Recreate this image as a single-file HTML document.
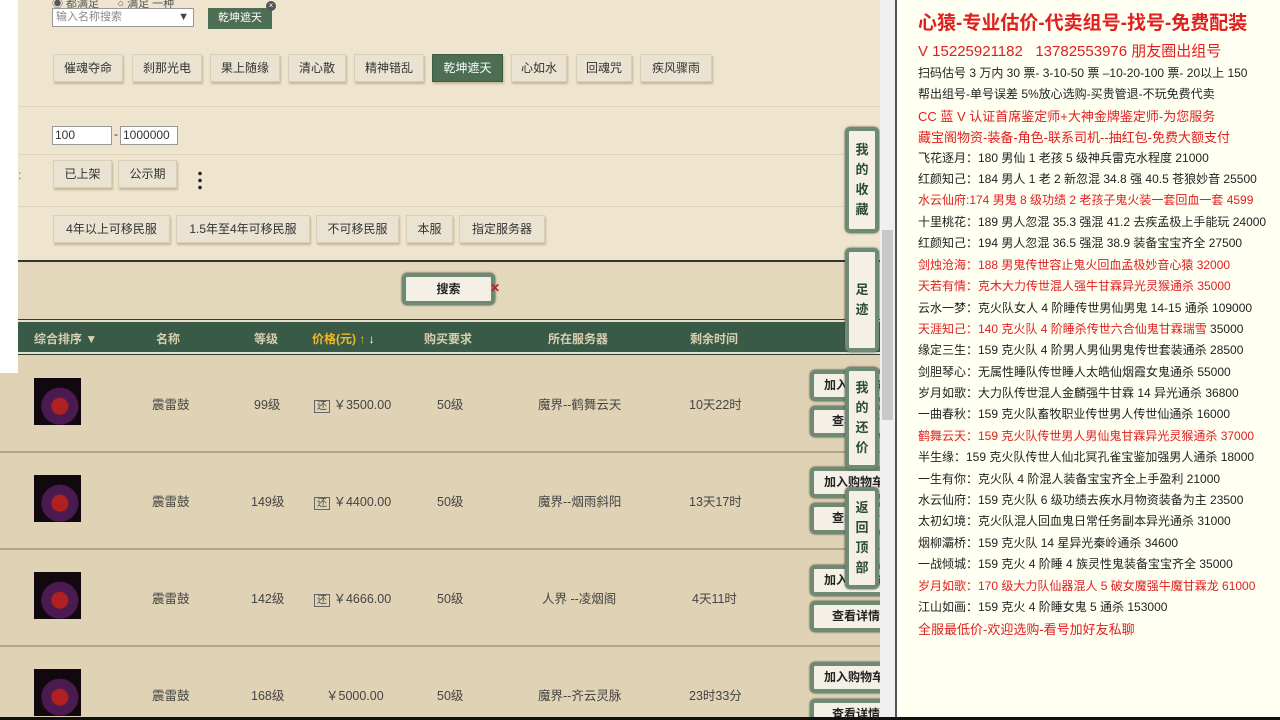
<!DOCTYPE html><html style="width:1280px;height:720px;overflow:hidden"><head><meta charset="utf-8"><style>
*{margin:0;padding:0;box-sizing:border-box}
body{width:1280px;height:720px;overflow:hidden;position:relative;background:#e0d3b5;font-family:"Liberation Sans","Noto Sans CJK SC",sans-serif;font-size:12px;color:#333}
.a{position:absolute}
.btn{position:absolute;height:28px;background:#eae3d2;border:1px solid #d8cfb8;box-shadow:1px 2px 2px #c4b898;color:#333;font-size:12px;line-height:26px;text-align:center}
.on{background:#4d6e52;color:#fff;border-color:#3e5c44}
.g{position:absolute;border:4px solid #6f8a72;border-radius:5px;background:#f4f0e6;box-shadow:0 0 2px #333;font-weight:bold;color:#222;font-size:12px;text-align:center}
.side{position:absolute;left:845px;width:34px;border:4px solid #6f8a72;border-radius:5px;background:#f4f0e6;color:#2c4a34;font-size:13px;font-weight:bold;text-align:center;line-height:20px;display:flex;flex-direction:column;justify-content:center;box-shadow:0 0 2px #444}
.r p{white-space:nowrap;position:absolute;left:918px;font-size:12px;color:#222}
.red{color:#e02020!important}
.row{position:absolute;left:0;width:880px;height:97px;border-bottom:2px solid #b0a588}
.row span{position:absolute;top:38px;color:#444;font-size:12.5px}
.img{position:absolute;left:34px;top:22px;width:47px;height:47px;background:radial-gradient(circle at 55% 60%,#b02020 0 8px,#4a1a50 9px 18px,#120810 19px)}
#wrap{position:absolute;left:0;top:0;width:1280px;height:720px;overflow:hidden}
</style></head><body><div id="wrap">
<div class="a" style="left:0;top:0;width:880px;height:260px;background:#efe5cf"></div>
<div class="a" style="left:0;top:260px;width:880px;height:62px;background:#e4d8bc;border-top:2px solid #333"></div>
<div class="a" style="left:0;top:0;width:18px;height:373px;background:#fff"></div>
<div class="a" style="left:18px;top:106px;width:862px;border-top:1px solid #e0d4b8"></div>
<div class="a" style="left:18px;top:154px;width:862px;border-top:1px solid #e0d4b8"></div>
<div class="a" style="left:18px;top:206px;width:862px;border-top:1px solid #e0d4b8"></div>
<div class="a" style="left:52px;top:-5px;font-size:11px;color:#555">◉ 都满足 &nbsp;&nbsp;&nbsp;&nbsp;&nbsp;○ 满足 一种</div>
<div class="a" style="left:52px;top:8px;width:142px;height:19px;background:#fff;border:1px solid #999;font-size:11px;color:#888;padding-left:3px;line-height:17px">输入名称搜索<span style="position:absolute;right:4px;color:#444">▼</span></div>
<div class="a on" style="left:208px;top:8px;width:64px;height:21px;background:#4d6e52;color:#fff;font-size:11px;line-height:21px;text-align:center">乾坤遮天</div>
<div class="a" style="left:266px;top:1px;width:10px;height:10px;border-radius:50%;background:#555;color:#fff;font-size:8px;line-height:10px;text-align:center">×</div>
<div class="btn" style="left:53px;top:54px;width:70px">催魂夺命</div>
<div class="btn" style="left:132px;top:54px;width:70px">刹那光电</div>
<div class="btn" style="left:210px;top:54px;width:70px">果上随缘</div>
<div class="btn" style="left:288px;top:54px;width:58px">清心散</div>
<div class="btn" style="left:354px;top:54px;width:70px">精神错乱</div>
<div class="btn on" style="left:432px;top:54px;width:71px">乾坤遮天</div>
<div class="btn" style="left:511px;top:54px;width:56px">心如水</div>
<div class="btn" style="left:576px;top:54px;width:56px">回魂咒</div>
<div class="btn" style="left:640px;top:54px;width:72px">疾风骤雨</div>
<div class="a" style="left:52px;top:126px;width:60px;height:19px;background:#fff;border:1px solid #999;line-height:17px;padding-left:2px">100</div>
<div class="a" style="left:114px;top:127px">-</div>
<div class="a" style="left:120px;top:126px;width:58px;height:19px;background:#fff;border:1px solid #999;line-height:17px;padding-left:2px">1000000</div>
<div class="a" style="left:18px;top:168px;color:#777">:</div>
<div class="btn" style="left:53px;top:160px;width:59px">已上架</div>
<div class="btn" style="left:118px;top:160px;width:59px">公示期</div>
<div class="a" style="left:198px;top:170px;width:4px;height:20px;background:radial-gradient(circle,#222 1.6px,transparent 2px) 0 0/4px 7px"></div>
<div class="btn" style="left:53px;top:215px;width:117px">4年以上可移民服</div>
<div class="btn" style="left:176px;top:215px;width:134px">1.5年至4年可移民服</div>
<div class="btn" style="left:316px;top:215px;width:83px">不可移民服</div>
<div class="btn" style="left:406px;top:215px;width:47px">本服</div>
<div class="btn" style="left:459px;top:215px;width:86px">指定服务器</div>
<div class="g" style="left:402px;top:273px;width:93px;height:32px;line-height:24px">搜索</div>
<div class="a" style="left:490px;top:281px;color:#c02020;font-weight:bold">✕</div>
<div class="a" style="left:18px;top:320px;width:862px;height:34px;background:#3a5a48;border-top:2px solid #e8e0cc;border-bottom:2px solid #e8e0cc;box-shadow:0 -1px 0 #2a4234,0 1px 0 #2a4234;color:#d8d0b0;font-weight:bold;font-size:12px">
<span class="a" style="left:16px;top:8px">综合排序 ▼</span><span class="a" style="left:138px;top:8px">名称</span><span class="a" style="left:236px;top:8px">等级</span><span class="a" style="left:294px;top:8px;color:#f0b820">价格(元) ↑ <span style="color:#fff">↓</span></span><span class="a" style="left:406px;top:8px">购买要求</span><span class="a" style="left:530px;top:8px">所在服务器</span><span class="a" style="left:672px;top:8px">剩余时间</span></div>
<div class="row" style="top:356px"><div class="img"></div><span style="left:152px">震雷鼓</span><span style="left:254px">99级</span><span style="left:314px"><b style="border:1px solid #666;font-weight:normal;font-size:10px;padding:0 2px">还</b> ￥3500.00</span><span style="left:437px">50级</span><span style="left:538px">魔界--鹤舞云天</span><span style="left:689px">10天22时</span></div>
<div class="row" style="top:453px"><div class="img"></div><span style="left:152px">震雷鼓</span><span style="left:251px">149级</span><span style="left:314px"><b style="border:1px solid #666;font-weight:normal;font-size:10px;padding:0 2px">还</b> ￥4400.00</span><span style="left:437px">50级</span><span style="left:538px">魔界--烟雨斜阳</span><span style="left:689px">13天17时</span></div>
<div class="row" style="top:550px"><div class="img"></div><span style="left:152px">震雷鼓</span><span style="left:251px">142级</span><span style="left:314px"><b style="border:1px solid #666;font-weight:normal;font-size:10px;padding:0 2px">还</b> ￥4666.00</span><span style="left:437px">50级</span><span style="left:542px">人界 --凌烟阁</span><span style="left:692px">4天11时</span></div>
<div class="row" style="top:647px;border:0"><div class="img"></div><span style="left:152px">震雷鼓</span><span style="left:251px">168级</span><span style="left:326px">￥5000.00</span><span style="left:437px">50级</span><span style="left:538px">魔界--齐云灵脉</span><span style="left:689px">23时33分</span></div>
<div class="g" style="left:810px;top:370px;width:80px;height:31px;line-height:23px;text-align:left;padding-left:10px">加入购物车</div>
<div class="g" style="left:810px;top:406px;width:80px;height:31px;line-height:23px;text-align:left;padding-left:18px">查看详情</div>
<div class="g" style="left:810px;top:467px;width:80px;height:31px;line-height:23px;text-align:left;padding-left:10px">加入购物车</div>
<div class="g" style="left:810px;top:503px;width:80px;height:31px;line-height:23px;text-align:left;padding-left:18px">查看详情</div>
<div class="g" style="left:810px;top:565px;width:80px;height:31px;line-height:23px;text-align:left;padding-left:10px">加入购物车</div>
<div class="g" style="left:810px;top:601px;width:80px;height:31px;line-height:23px;text-align:left;padding-left:18px">查看详情</div>
<div class="g" style="left:810px;top:662px;width:80px;height:31px;line-height:23px;text-align:left;padding-left:10px">加入购物车</div>
<div class="g" style="left:810px;top:699px;width:80px;height:31px;line-height:23px;text-align:left;padding-left:18px">查看详情</div>
<div class="side" style="top:127px;height:106px">我<br>的<br>收<br>藏</div>
<div class="side" style="top:248px;height:104px">足<br>迹</div>
<div class="side" style="top:367px;height:102px">我<br>的<br>还<br>价</div>
<div class="side" style="top:487px;height:102px">返<br>回<br>顶<br>部</div>
<div class="a" style="left:880px;top:0;width:15px;height:720px;background:#f0f0f0"></div>
<div class="a" style="left:882px;top:230px;width:11px;height:190px;background:#c8c8c8"></div>
<div class="a" style="left:895px;top:0;width:385px;height:720px;background:#fffff2;border-left:2px solid #555"></div>
<div class="r">
<p class="red" style="top:8px;font-size:19px;left:918px;font-weight:bold">心猿-专业估价-代卖组号-找号-免费配装</p>
<p class="red" style="top:40px;font-size:15px">V 15225921182 &nbsp;&nbsp;13782553976 朋友圈出组号</p>
<p style="top:64px">扫码估号 3 万内 30 票- 3-10-50 票 –10-20-100 票- 20以上 150</p>
<p style="top:85px">帮出组号-单号误差 5%放心选购-买贵管退-不玩免费代卖</p>
<p class="red" style="top:106px;font-size:13px">CC 蓝 V 认证首席鉴定师+大神金牌鉴定师-为您服务</p>
<p class="red" style="top:127px;font-size:13px">藏宝阁物资-装备-角色-联系司机--抽红包-免费大额支付</p>
<p style="top:149px">飞花逐月：180 男仙 1 老孩 5 级神兵雷克水程度 21000</p>
<p style="top:170px">红颜知己：184 男人 1 老 2 新忽混 34.8 强 40.5 苍狼妙音 25500</p>
<p class="red" style="top:191px">水云仙府:174 男鬼 8 级功绩 2 老孩子鬼火装一套回血一套 4599</p>
<p style="top:213px">十里桃花：189 男人忽混 35.3 强混 41.2 去疾孟极上手能玩 24000</p>
<p style="top:234px">红颜知己：194 男人忽混 36.5 强混 38.9 装备宝宝齐全 27500</p>
<p class="red" style="top:256px">剑烛沧海：188 男鬼传世容止鬼火回血孟极妙音心猿 32000</p>
<p class="red" style="top:277px">天若有情：克木大力传世混人强牛甘霖异光灵猴通杀 35000</p>
<p style="top:299px">云水一梦：克火队女人 4 阶睡传世男仙男鬼 14-15 通杀 109000</p>
<p class="red" style="top:320px">天涯知己：140 克火队 4 阶睡杀传世六合仙鬼甘霖瑞雪 <span style="color:#222">35000</span></p>
<p style="top:341px">缘定三生：159 克火队 4 阶男人男仙男鬼传世套装通杀 28500</p>
<p style="top:363px">剑胆琴心：无属性睡队传世睡人太皓仙烟霞女鬼通杀 55000</p>
<p style="top:384px">岁月如歌：大力队传世混人金麟强牛甘霖 14 异光通杀 36800</p>
<p style="top:405px">一曲春秋：159 克火队畜牧职业传世男人传世仙通杀 16000</p>
<p class="red" style="top:427px">鹤舞云天：159 克火队传世男人男仙鬼甘霖异光灵猴通杀 37000</p>
<p style="top:448px">半生缘：159 克火队传世人仙北冥孔雀宝鉴加强男人通杀 18000</p>
<p style="top:470px">一生有你：克火队 4 阶混人装备宝宝齐全上手盈利 21000</p>
<p style="top:491px">水云仙府：159 克火队 6 级功绩去疾水月物资装备为主 23500</p>
<p style="top:512px">太初幻境：克火队混人回血鬼日常任务副本异光通杀 31000</p>
<p style="top:534px">烟柳灞桥：159 克火队 14 星异光秦岭通杀 34600</p>
<p style="top:555px">一战倾城：159 克火 4 阶睡 4 族灵性鬼装备宝宝齐全 35000</p>
<p class="red" style="top:577px">岁月如歌：170 级大力队仙器混人 5 破女魔强牛魔甘霖龙 61000</p>
<p style="top:598px">江山如画：159 克火 4 阶睡女鬼 5 通杀 153000</p>
<p class="red" style="top:619px;font-size:13px">全服最低价-欢迎选购-看号加好友私聊</p>
</div>
<div class="a" style="left:0;top:717px;width:1280px;height:3px;background:#111"></div>
</div></body></html>
